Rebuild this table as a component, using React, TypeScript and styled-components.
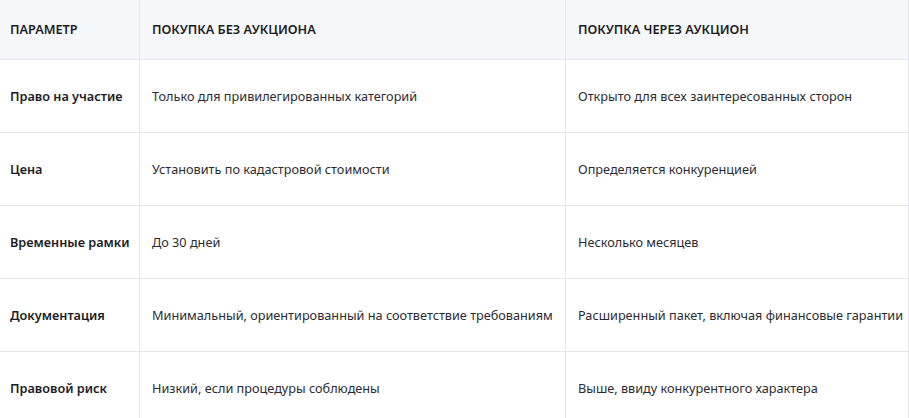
import React from 'react';
import styled, { createGlobalStyle } from 'styled-components';

const GlobalStyle = createGlobalStyle`
  html, body {
    margin: 0;
    padding: 0;
    background: #ffffff;
  }
  body {
    font-family: "Noto Sans", "Open Sans", Arial, sans-serif;
    overflow: hidden;
  }
`;

const Table = styled.table`
  width: 912px;
  margin-left: -3px;
  border-collapse: collapse;
  table-layout: fixed;
  font-size: 12.7px;
  color: #2b2b33;
`;

const HeadCell = styled.th<{ $width?: number }>`
  box-sizing: border-box;
  width: ${props => (props.$width ? `${props.$width}px` : 'auto')};
  height: 59px;
  padding: 0 12px;
  background: #f6f7fa;
  border: 1px solid #e6e7ec;
  border-top: none;
  font-weight: 600;
  text-align: left;
  text-transform: uppercase;
  color: #1c1c24;
  white-space: nowrap;
`;

const Cell = styled.td<{ $label?: boolean }>`
  box-sizing: border-box;
  height: 73px;
  padding: 0 12px;
  border: 1px solid #e6e7ec;
  font-weight: ${props => (props.$label ? 600 : 400)};
  color: ${props => (props.$label ? '#1c1c24' : '#2b2b33')};
  white-space: nowrap;
  vertical-align: middle;
`;

interface Row {
  param: string;
  direct: string;
  auction: string;
}

const rows: Row[] = [
  {
    param: 'Право на участие',
    direct: 'Только для привилегированных категорий',
    auction: 'Открыто для всех заинтересованных сторон',
  },
  {
    param: 'Цена',
    direct: 'Установить по кадастровой стоимости',
    auction: 'Определяется конкуренцией',
  },
  {
    param: 'Временные рамки',
    direct: 'До 30 дней',
    auction: 'Несколько месяцев',
  },
  {
    param: 'Документация',
    direct: 'Минимальный, ориентированный на соответствие требованиям',
    auction: 'Расширенный пакет, включая финансовые гарантии',
  },
  {
    param: 'Правовой риск',
    direct: 'Низкий, если процедуры соблюдены',
    auction: 'Выше, ввиду конкурентного характера',
  },
];

const App: React.FC = () => {
  return (
    <>
      <GlobalStyle />
      <Table>
        <thead>
          <tr>
            <HeadCell $width={142}>Параметр</HeadCell>
            <HeadCell $width={426}>Покупка без аукциона</HeadCell>
            <HeadCell>Покупка через аукцион</HeadCell>
          </tr>
        </thead>
        <tbody>
          {rows.map(row => (
            <tr key={row.param}>
              <Cell $label>{row.param}</Cell>
              <Cell>{row.direct}</Cell>
              <Cell>{row.auction}</Cell>
            </tr>
          ))}
        </tbody>
      </Table>
    </>
  );
};

export default App;
